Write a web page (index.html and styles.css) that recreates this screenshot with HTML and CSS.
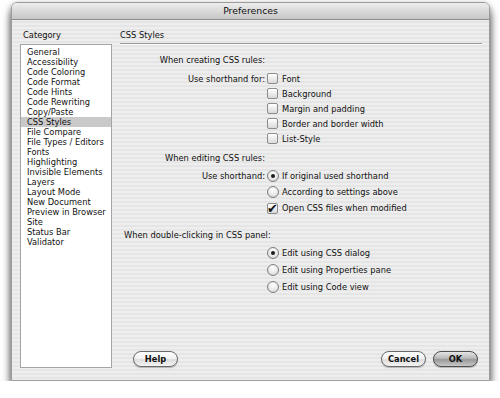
FILE: index.html
```html
<!DOCTYPE html>
<html lang="en">
<head>
    <meta charset="UTF-8">
    <title>Preferences</title>
    <link rel="stylesheet" href="styles.css">
</head>
<body>
    <div class="window">
        <div class="title-bar">Preferences</div>

        <div class="content">
            <!-- category list -->
            <div class="category">
                <div class="section-label">Category</div>
                <ul class="category-list">
                    <li>General</li>
                    <li>Accessibility</li>
                    <li>Code Coloring</li>
                    <li>Code Format</li>
                    <li>Code Hints</li>
                    <li>Code Rewriting</li>
                    <li>Copy/Paste</li>
                    <li class="selected">CSS Styles</li>
                    <li>File Compare</li>
                    <li>File Types / Editors</li>
                    <li>Fonts</li>
                    <li>Highlighting</li>
                    <li>Invisible Elements</li>
                    <li>Layers</li>
                    <li>Layout Mode</li>
                    <li>New Document</li>
                    <li>Preview in Browser</li>
                    <li>Site</li>
                    <li>Status Bar</li>
                    <li>Validator</li>
                </ul>
            </div>

            <!-- settings panel -->
            <div class="panel">
                <div class="panel-title">CSS Styles</div>

                <div class="row heading creating">
                    <div class="label">When creating CSS rules:</div>
                </div>
                <div class="row check-row first">
                    <div class="label">Use shorthand for:</div>
                    <label class="option"><span class="checkbox"></span>Font</label>
                </div>
                <div class="row check-row">
                    <div class="label"></div>
                    <label class="option"><span class="checkbox"></span>Background</label>
                </div>
                <div class="row check-row">
                    <div class="label"></div>
                    <label class="option"><span class="checkbox"></span>Margin and padding</label>
                </div>
                <div class="row check-row">
                    <div class="label"></div>
                    <label class="option"><span class="checkbox"></span>Border and border width</label>
                </div>
                <div class="row check-row">
                    <div class="label"></div>
                    <label class="option"><span class="checkbox"></span>List-Style</label>
                </div>

                <div class="row heading editing">
                    <div class="label">When editing CSS rules:</div>
                </div>
                <div class="row radio-row first">
                    <div class="label">Use shorthand:</div>
                    <label class="option"><span class="radio on"></span>If original used shorthand</label>
                </div>
                <div class="row radio-row">
                    <div class="label"></div>
                    <label class="option"><span class="radio"></span>According to settings above</label>
                </div>
                <div class="row radio-row">
                    <div class="label"></div>
                    <label class="option"><span class="checkbox checked">✔</span>Open CSS files when modified</label>
                </div>

                <div class="row heading clicking">
                    <div class="wide-label">When double-clicking in CSS panel:</div>
                </div>
                <div class="row edit-row first">
                    <div class="label"></div>
                    <label class="option"><span class="radio on"></span>Edit using CSS dialog</label>
                </div>
                <div class="row edit-row">
                    <div class="label"></div>
                    <label class="option"><span class="radio"></span>Edit using Properties pane</label>
                </div>
                <div class="row edit-row">
                    <div class="label"></div>
                    <label class="option"><span class="radio"></span>Edit using Code view</label>
                </div>

                <div class="buttons">
                    <button class="btn">Help</button>
                    <div class="spacer"></div>
                    <button class="btn">Cancel</button>
                    <button class="btn default">OK</button>
                </div>
            </div>
        </div>
    </div>
</body>
</html>
```

FILE: styles.css
```css
body {
    margin: 0;
    padding: 2px 0 0 11px;
    background: #ffffff;
    font-family: 'DejaVu Sans', 'Liberation Sans', sans-serif;
    font-size: 8.3px;
    color: #111;
}

.window {
    width: 477px;
    height: 377px;
    border: 1px solid #9c9c9c;
    border-radius: 6px 6px 0 0;
    background: repeating-linear-gradient(#eeeeee 0, #eeeeee 2px, #e5e5e5 2px, #e5e5e5 4px);
    box-shadow: 0 8px 10px rgba(0, 0, 0, 0.6), 0 2px 6px rgba(0, 0, 0, 0.35);
    display: flex;
    flex-direction: column;
    overflow: hidden;
}

.title-bar {
    height: 16px;
    line-height: 16px;
    text-align: center;
    font-size: 9.3px;
    color: #111;
    background: linear-gradient(#ededed, #d6d6d6 60%, #c6c6c6);
    border-bottom: 1px solid #8e8e8e;
    flex-shrink: 0;
}

.content {
    flex: 1;
    display: flex;
    gap: 8px;
    padding: 10px 7px 12px 8px;
}

/* category list */
.category {
    width: 92px;
    display: flex;
    flex-direction: column;
}

.section-label {
    height: 10px;
    line-height: 10px;
    padding-left: 3px;
    margin-bottom: 4px;
}

.category-list {
    flex: 1;
    list-style: none;
    margin: 0;
    padding: 2px 0 0;
    background: #fff;
    border: 1px solid #a4a4a4;
}

.category-list li {
    height: 10px;
    line-height: 10px;
    padding-left: 6px;
    white-space: nowrap;
}

.category-list li.selected {
    background: #c9c9c9;
}

/* right panel */
.panel {
    flex: 1;
    display: flex;
    flex-direction: column;
}

.panel-title {
    height: 10px;
    line-height: 10px;
    padding-bottom: 3px;
    border-bottom: 1px solid #9a9a9a;
    box-shadow: 0 1px 0 #fafafa;
}

.row {
    display: flex;
    align-items: center;
    height: 15px;
}

.label {
    width: 145px;
    text-align: right;
    white-space: nowrap;
    flex-shrink: 0;
}

.wide-label {
    padding-left: 4px;
    white-space: nowrap;
}

.heading {
    height: 16px;
}

.creating {
    margin-top: 8px;
}

.check-row.first {
    margin-top: 3px;
}

.editing {
    margin-top: 4px;
}

.radio-row {
    height: 16px;
}

.radio-row.first {
    margin-top: 2px;
}

.clicking {
    margin-top: 11px;
}

.edit-row {
    height: 17px;
}

.edit-row.first {
    margin-top: 1px;
}

.option {
    display: flex;
    align-items: center;
    margin-left: 2px;
    white-space: nowrap;
}

.checkbox {
    position: relative;
    width: 9px;
    height: 9px;
    margin-right: 4px;
    border: 1px solid #8c8c8c;
    border-radius: 2px;
    background: linear-gradient(#ffffff, #ececec 50%, #d9d9d9);
    box-shadow: inset 0 1px 0 #fff;
}

.checkbox.checked {
    display: flex;
    justify-content: center;
    align-items: flex-end;
    font-size: 13px;
    line-height: 9px;
    color: #111;
    overflow: visible;
}

.radio {
    position: relative;
    width: 10px;
    height: 10px;
    margin-right: 3px;
    border: 1px solid #7e7e7e;
    border-radius: 50%;
    background: radial-gradient(circle at 50% 30%, #ffffff, #e6e6e6 60%, #c8c8c8);
}

.radio.on::after {
    content: '';
    position: absolute;
    left: 3px;
    top: 3px;
    width: 4px;
    height: 4px;
    border-radius: 50%;
    background: #1a1a1a;
}

/* buttons */
.buttons {
    margin-top: auto;
    display: flex;
    align-items: center;
    padding: 0 4px 1px 13px;
}

.spacer {
    flex: 1;
}

.btn {
    width: 45px;
    height: 16px;
    padding: 0;
    margin-left: 7px;
    font-family: 'DejaVu Sans', sans-serif;
    font-size: 8.3px;
    font-weight: bold;
    color: #111;
    border: 1px solid #6a6a6a;
    border-radius: 8px;
    background: linear-gradient(#ffffff, #f2f2f2 45%, #dddddd 55%, #f4f4f4);
    box-shadow: 0 1px 1px rgba(0, 0, 0, 0.25);
}

.btn:first-child {
    margin-left: 0;
}

.btn.default {
    border-color: #4e4e4e;
    background: linear-gradient(#e6e6e6, #b8b8b8 45%, #999999 55%, #c8c8c8);
}
```
